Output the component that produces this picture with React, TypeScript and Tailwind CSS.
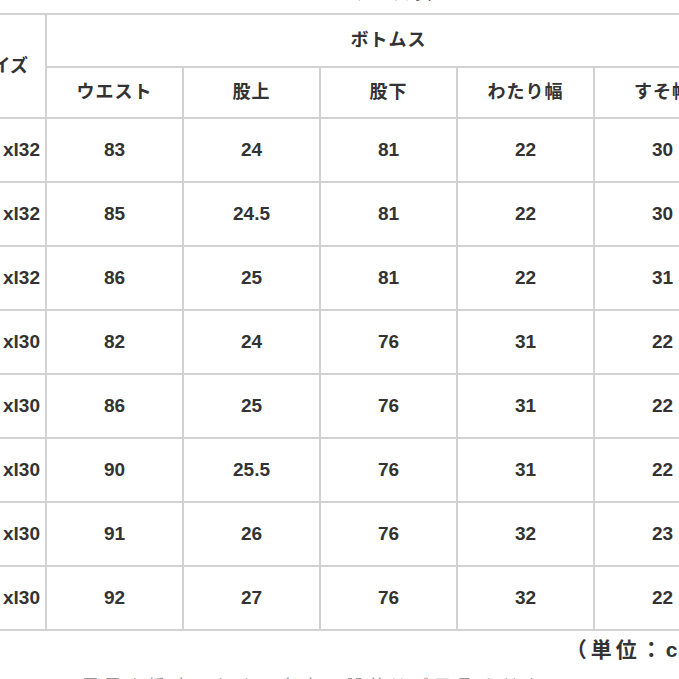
import React from "react";

const rows: [string, string, string, string, string, string][] = [
  ["xl32", "83", "24", "81", "22", "30"],
  ["xl32", "85", "24.5", "81", "22", "30"],
  ["xl32", "86", "25", "81", "22", "31"],
  ["xl30", "82", "24", "76", "31", "22"],
  ["xl30", "86", "25", "76", "31", "22"],
  ["xl30", "90", "25.5", "76", "31", "22"],
  ["xl30", "91", "26", "76", "32", "23"],
  ["xl30", "92", "27", "76", "32", "22"],
];

const heads = ["ウエスト", "股上", "股下", "わたり幅", "すそ幅"];

export default function App() {
  return (
    <div
      className="w-[679px] h-[679px] overflow-hidden bg-white text-[#333]"
      style={{ fontFamily: '"Liberation Sans", "Noto Sans CJK JP", sans-serif' }}
    >
      <div className="w-[731px]">
        <div className="h-[13px] overflow-hidden flex justify-center pl-[55px]">
          <div className="text-[18px] font-bold leading-[22px] mt-[-18px] tracking-[3px]">サイズ表</div>
        </div>
        <table className="w-[731px] table-fixed border-collapse">
          <colgroup>
            <col className="w-[46px]" />
            <col className="w-[137px]" />
            <col className="w-[137px]" />
            <col className="w-[137px]" />
            <col className="w-[137px]" />
            <col className="w-[137px]" />
          </colgroup>
          <thead>
            <tr className="h-[53px]">
              <th rowSpan={2} className="border-2 border-l-0 border-[#d2d2d2] p-0 font-bold text-[18px]">
                <div className="w-[45px] overflow-hidden flex justify-end pr-[17px] whitespace-nowrap">
                  <span className="shrink-0">サイズ</span>
                </div>
              </th>
              <th colSpan={5} className="border-2 border-[#d2d2d2] p-0 font-bold text-[18px] tracking-[1px]">
                ボトムス
              </th>
            </tr>
            <tr className="h-[51px]">
              {heads.map((h) => (
                <th key={h} className="border-2 border-[#d2d2d2] p-0 font-bold text-[18px] tracking-[1px]">
                  {h}
                </th>
              ))}
            </tr>
          </thead>
          <tbody>
            {rows.map((r, i) => (
              <tr key={i} className="h-[64px]">
                <td className="border-2 border-l-0 border-[#d2d2d2] p-0 font-bold text-[19px]">
                  <div className="w-[45px] overflow-hidden flex justify-end pr-[5px] whitespace-nowrap">
                    <span className="shrink-0">{r[0]}</span>
                  </div>
                </td>
                {r.slice(1).map((v, j) => (
                  <td key={j} className="border-2 border-[#d2d2d2] p-0 text-center font-bold text-[19px]">
                    {v}
                  </td>
                ))}
              </tr>
            ))}
          </tbody>
        </table>
        <div className="flex justify-end pr-[2px] pt-[4px] text-[21px] font-bold leading-[30px] tracking-[4px]">
          （単位：cm）
        </div>
        <div className="pl-[50px] pt-[10px] text-[16px] text-[#999] tracking-[6px] leading-[22px]">
          ※ 平置き採寸のため、多少の誤差はご了承ください。
        </div>
      </div>
    </div>
  );
}
